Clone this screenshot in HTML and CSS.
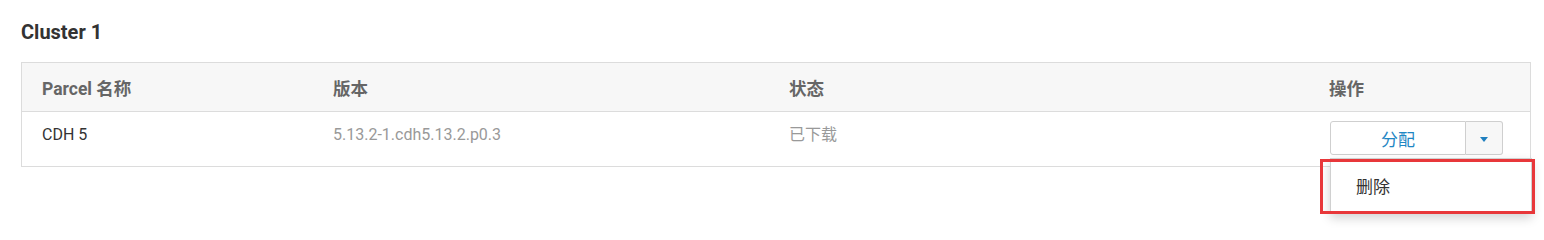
FILE: index.html
```html
<!DOCTYPE html>
<html lang="zh-CN">
<head>
<meta charset="utf-8">
<title>Parcels</title>
<link rel="stylesheet" href="styles.css">
</head>
<body>
<div class="page">
  <h2 class="cluster-title">Cluster 1</h2>
  <table class="parcel-table">
    <thead>
      <tr>
        <th class="col-name">Parcel 名称</th>
        <th class="col-version">版本</th>
        <th class="col-status">状态</th>
        <th class="col-action">操作</th>
      </tr>
    </thead>
    <tbody>
      <tr>
        <td class="name">CDH 5</td>
        <td class="muted">5.13.2-1.cdh5.13.2.p0.3</td>
        <td class="muted">已下载</td>
        <td class="action">
          <div class="split-btn">
            <button class="btn-main">分配</button>
            <button class="btn-caret"><span class="caret"></span></button>
            <div class="dropdown">
              <div class="dropdown-item">删除</div>
            </div>
            <div class="highlight"></div>
          </div>
        </td>
      </tr>
    </tbody>
  </table>
</div>
</body>
</html>
```
FILE: styles.css
```css
html, body {
  margin: 0;
  padding: 0;
  background: #fff;
  height: 100%;
}
body {
  font-family: Roboto, "Noto Sans CJK SC", sans-serif;
  color: #333;
  min-height: 235px;
}
.page {
  padding: 20px 14px 0 21px;
}
.cluster-title {
  margin: 0 0 18px 0;
  font-size: 20px;
  font-weight: 700;
  line-height: 24px;
  color: #333;
}
.parcel-table {
  width: 1510px;
  border-collapse: collapse;
  border: 1px solid #dcdcdc;
}
.parcel-table th {
  background: #f7f7f7;
  color: #666;
  font-size: 17.5px;
  font-weight: 700;
  text-align: left;
  height: 48px;
  padding: 0 20px;
  border-bottom: 1px solid #dcdcdc;
}
.col-name { width: 251px; }
.col-version { width: 416px; }
.col-status { width: 500px; }
.parcel-table td {
  height: 55px;
  padding: 0 20px;
  font-size: 16px;
  vertical-align: top;
  line-height: 46px;
  box-sizing: border-box;
}
.parcel-table td.name { color: #333; }
.parcel-table td.muted { color: #999; }
.parcel-table td.action {
  padding: 9px 20px 0 21px;
  line-height: normal;
}
.split-btn {
  position: relative;
  display: flex;
  width: 173px;
  height: 34px;
  box-sizing: border-box;
}
.split-btn button {
  font-family: Roboto, "Noto Sans CJK SC", sans-serif;
  border: 1px solid #cfcfcf;
  margin: 0;
  cursor: pointer;
}
.btn-main {
  flex: 1;
  background: #fff;
  color: #1f87c4;
  font-size: 17px;
  border-radius: 3px 0 0 3px;
}
.btn-caret {
  width: 37px;
  background: #f7f7f7;
  border-left: none !important;
  border-radius: 0 3px 3px 0;
  display: flex;
  align-items: center;
  justify-content: center;
  padding: 0;
}
.caret {
  width: 0;
  height: 0;
  border-left: 4.5px solid transparent;
  border-right: 4.5px solid transparent;
  border-top: 5px solid #1f7fbf;
  margin-top: 2px;
}
.dropdown {
  position: absolute;
  left: 0;
  top: 37px;
  width: 202px;
  height: 55px;
  background: #fff;
  border: 1px solid #d0d0d0;
  box-sizing: border-box;
  box-shadow: 0 5px 10px rgba(0, 0, 0, 0.18);
  display: flex;
  align-items: center;
  z-index: 2;
}
.dropdown-item {
  padding-left: 25px;
  font-size: 17px;
  color: #333;
}
.highlight {
  position: absolute;
  left: -10px;
  top: 38px;
  width: 215px;
  height: 55px;
  box-sizing: border-box;
  border: 3px solid #e8373a;
  pointer-events: none;
  z-index: 3;
}
```
